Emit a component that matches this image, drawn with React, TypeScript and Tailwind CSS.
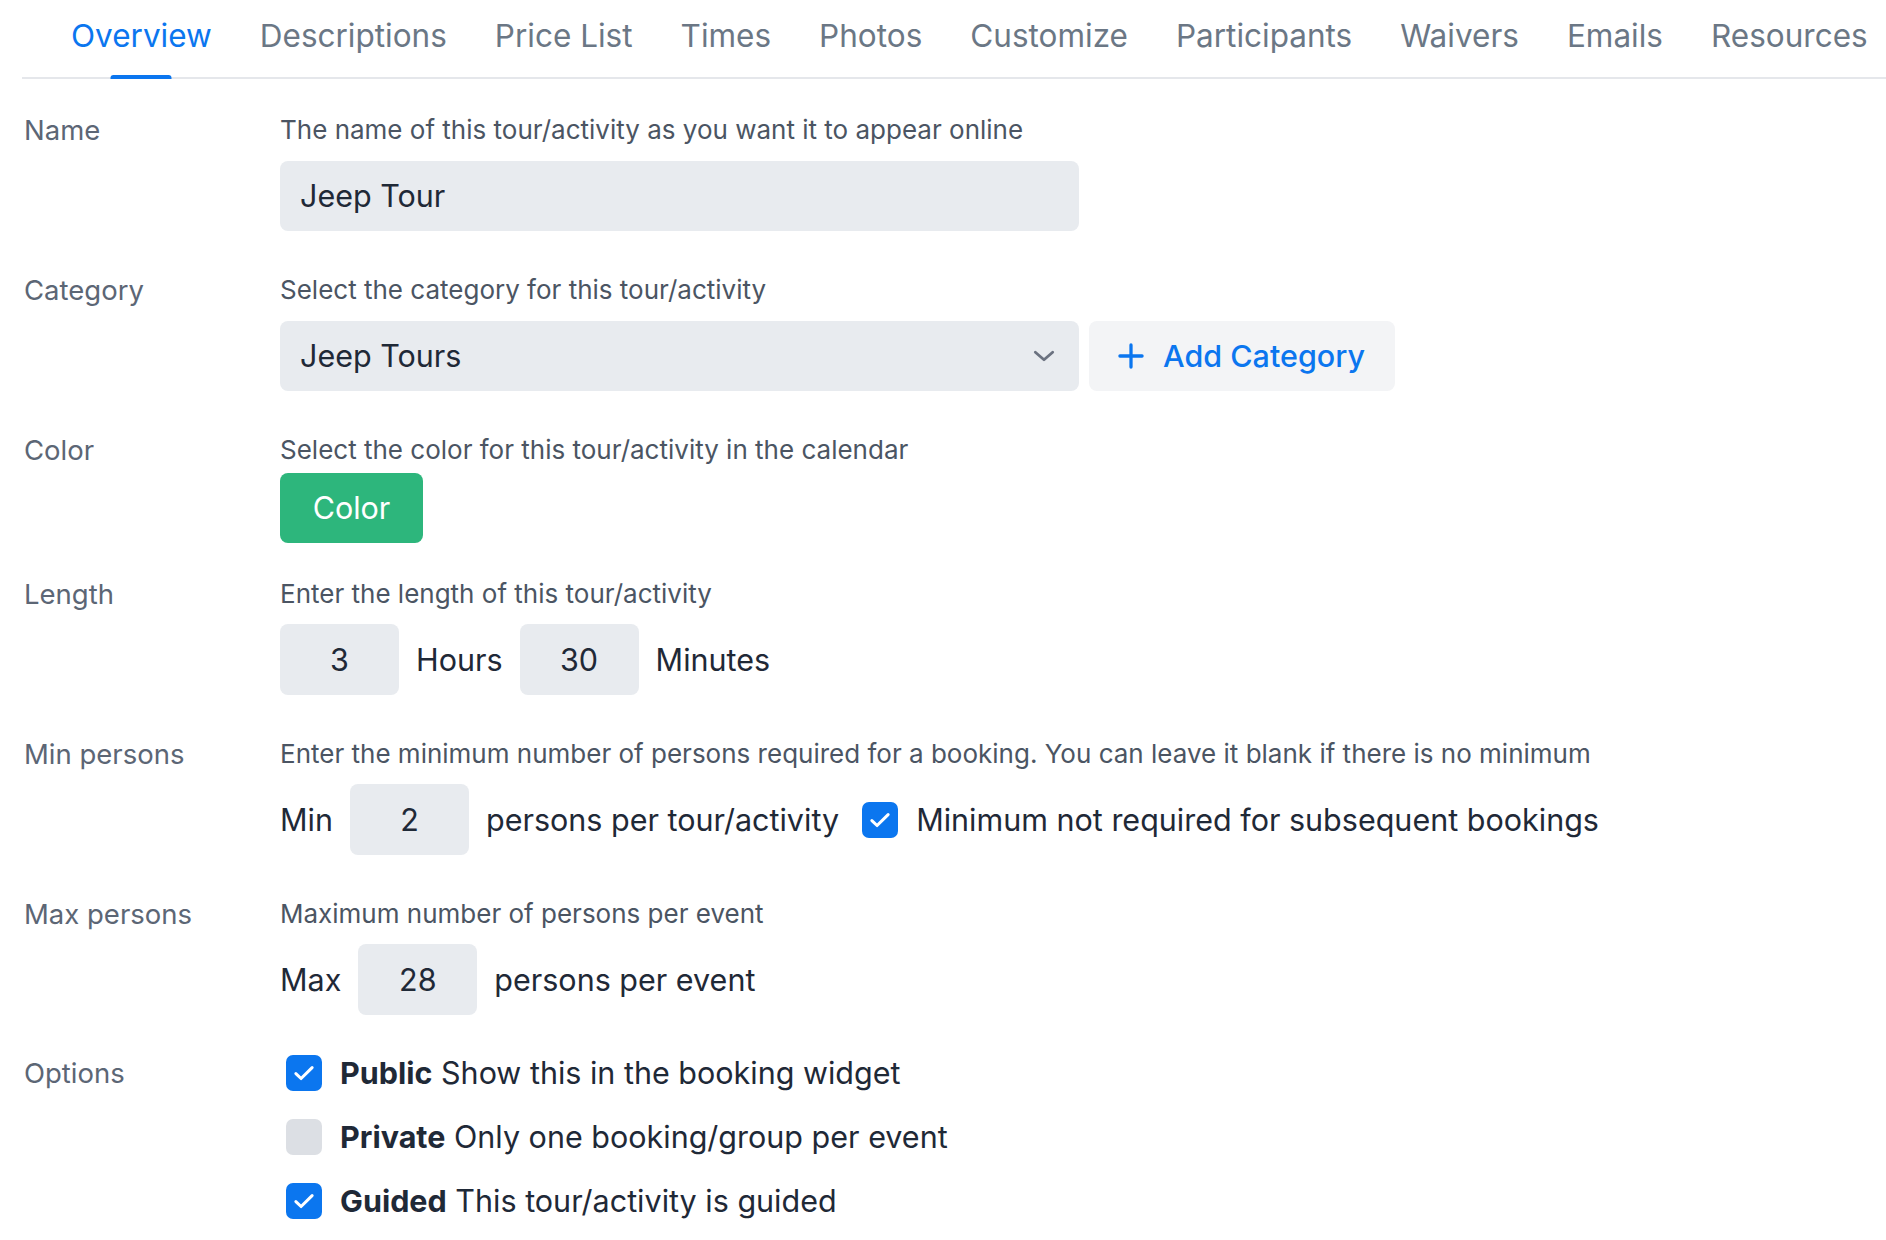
import React from "react";

const tabs = [
  "Overview",
  "Descriptions",
  "Price List",
  "Times",
  "Photos",
  "Customize",
  "Participants",
  "Waivers",
  "Emails",
  "Resources",
];

function Check({ checked }: { checked: boolean }) {
  return (
    <span
      className={
        "flex h-[36px] w-[36px] shrink-0 items-center justify-center rounded-[7px] " +
        (checked ? "bg-[#0b76ef]" : "bg-[#dcdfe4]")
      }
    >
      {checked && (
        <svg width="26" height="26" viewBox="0 0 24 24" fill="none">
          <path
            d="M4.5 12.5l4.8 4.6L19.5 7"
            stroke="white"
            strokeWidth="2.8"
            strokeLinecap="round"
            strokeLinejoin="round"
          />
        </svg>
      )}
    </span>
  );
}

function Row({
  label,
  children,
}: {
  label: string;
  children: React.ReactNode;
}) {
  return (
    <div className="flex">
      <div className="w-[258px] shrink-0 pl-[2px] text-[27.5px] leading-[36px] text-[#5c6675]">
        {label}
      </div>
      <div className="flex-1">{children}</div>
    </div>
  );
}

function Desc({ children }: { children: React.ReactNode }) {
  return (
    <div className="whitespace-nowrap text-[26px] leading-[36px] text-[#4b5563]">
      {children}
    </div>
  );
}

function NumBox({ value }: { value: string }) {
  return (
    <div className="flex h-[71px] w-[119px] shrink-0 items-center justify-center rounded-[8px] bg-[#e8ebef] text-[30.5px] text-[#1f2937]">
      {value}
    </div>
  );
}

export default function App() {
  return (
    <div
      className="min-h-screen bg-white pl-[22px] text-[#1f2937]"
      style={{ fontFamily: "Inter, 'Noto Sans', sans-serif" }}
    >
      <div className="flex border-b-2 border-[#e5e7eb] pl-[25px]">
        {tabs.map((t, i) => (
          <div
            key={t}
            className={
              "relative whitespace-nowrap px-[24px] pt-[18px] pb-[23px] text-[31.5px] leading-[36px] " +
              (i === 0 ? "text-[#0b76ef]" : "text-[#6b7785]")
            }
          >
            {t}
            {i === 0 && (
              <span className="absolute bottom-[-2px] left-1/2 h-[4px] w-[61px] -translate-x-1/2 rounded-t-[3px] bg-[#0b76ef]" />
            )}
          </div>
        ))}
      </div>

      <div className="pt-[33px]">
        <Row label="Name">
          <Desc>The name of this tour/activity as you want it to appear online</Desc>
          <div className="mt-[13px] flex h-[70px] w-[799px] items-center rounded-[8px] bg-[#e8ebef] pl-[20px] text-[30.5px] text-[#1f2937]">
            Jeep Tour
          </div>
        </Row>

        <div className="mt-[41px]">
          <Row label="Category">
            <Desc>Select the category for this tour/activity</Desc>
            <div className="mt-[13px] flex gap-[10px]">
              <div className="flex h-[70px] w-[799px] items-center justify-between rounded-[8px] bg-[#e8ebef] pl-[20px] pr-[22px] text-[30.5px] text-[#1f2937]">
                <span>Jeep Tours</span>
                <svg width="26" height="26" viewBox="0 0 24 24" fill="none">
                  <path
                    d="M4 8.5l8 7 8-7"
                    stroke="#6b7280"
                    strokeWidth="2.6"
                    strokeLinecap="round"
                    strokeLinejoin="round"
                  />
                </svg>
              </div>
              <div className="flex h-[70px] w-[306px] items-center gap-[18px] rounded-[8px] bg-[#f3f4f6] pl-[28px] text-[30.5px] font-medium text-[#0b76ef]">
                <svg width="28" height="28" viewBox="0 0 24 24" fill="none">
                  <path
                    d="M12 2.5v19M2.5 12h19"
                    stroke="#0b76ef"
                    strokeWidth="2.8"
                    strokeLinecap="round"
                  />
                </svg>
                <span>Add Category</span>
              </div>
            </div>
          </Row>
        </div>

        <div className="mt-[41px]">
          <Row label="Color">
            <Desc>Select the color for this tour/activity in the calendar</Desc>
            <div className="mt-[5px] flex h-[70px] w-[143px] items-center justify-center rounded-[8px] bg-[#2db67c] text-[30.5px] text-white">
              Color
            </div>
          </Row>
        </div>

        <div className="mt-[33px]">
          <Row label="Length">
            <Desc>Enter the length of this tour/activity</Desc>
            <div className="mt-[12px] flex items-center gap-[17px] text-[30.5px] text-[#1f2937]">
              <NumBox value="3" />
              <span>Hours</span>
              <NumBox value="30" />
              <span>Minutes</span>
            </div>
          </Row>
        </div>

        <div className="mt-[41px]">
          <Row label="Min persons">
            <Desc>
              Enter the minimum number of persons required for a booking. You can
              leave it blank if there is no minimum
            </Desc>
            <div className="mt-[12px] flex items-center gap-[17px] whitespace-nowrap text-[30.5px] text-[#1f2937]">
              <span>Min</span>
              <NumBox value="2" />
              <span>persons per tour/activity</span>
              <span className="ml-[6px] flex items-center gap-[18px]">
                <Check checked />
                <span>Minimum not required for subsequent bookings</span>
              </span>
            </div>
          </Row>
        </div>

        <div className="mt-[41px]">
          <Row label="Max persons">
            <Desc>Maximum number of persons per event</Desc>
            <div className="mt-[12px] flex items-center gap-[17px] text-[30.5px] text-[#1f2937]">
              <span>Max</span>
              <NumBox value="28" />
              <span>persons per event</span>
            </div>
          </Row>
        </div>

        <div className="mt-[40px]">
          <Row label="Options">
            <div className="flex flex-col gap-[28px] pl-[6px] text-[30.5px] text-[#1f2937]">
              {[
                { b: "Public", t: "Show this in the booking widget", c: true },
                { b: "Private", t: "Only one booking/group per event", c: false },
                { b: "Guided", t: "This tour/activity is guided", c: true },
              ].map((o) => (
                <div key={o.b} className="flex h-[36px] items-center gap-[18px]">
                  <Check checked={o.c} />
                  <span className="whitespace-nowrap">
                    <span className="font-bold">{o.b}</span> {o.t}
                  </span>
                </div>
              ))}
            </div>
          </Row>
        </div>
      </div>
    </div>
  );
}
